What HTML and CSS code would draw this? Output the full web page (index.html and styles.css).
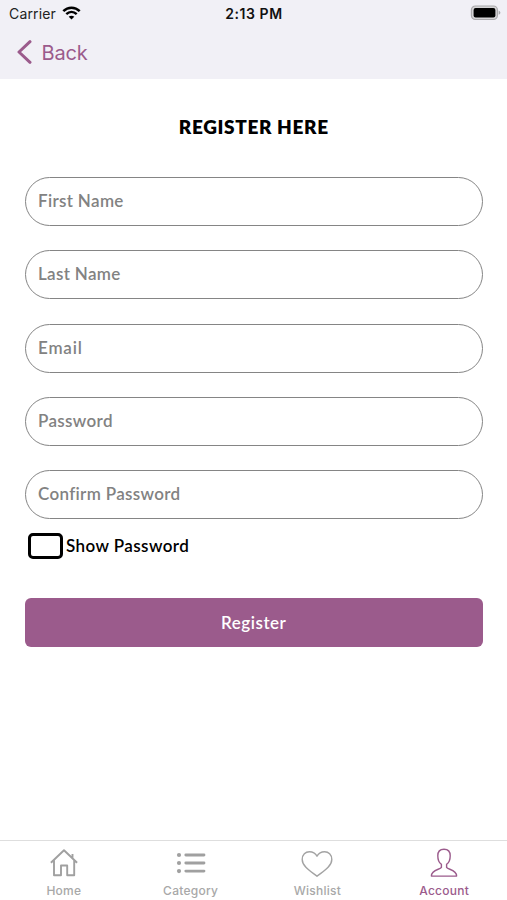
FILE: index.html
```html
<!DOCTYPE html>
<html lang="en">
<head>
<meta charset="utf-8">
<title>Register</title>
<link rel="stylesheet" href="styles.css">
</head>
<body>
<div class="screen">
  <header class="header">
    <div class="status">
      <div class="carrier"><span class="carrier-name">Carrier</span>
        <svg class="wifi" width="19" height="14" viewBox="0 0 19 14"><g fill="none" stroke="#000" stroke-width="2.5"><path d="M1.3 5.1C6 .5 13 .5 17.7 5.1"/><path d="M4.3 8.2C7.4 5.3 11.6 5.3 14.7 8.2"/></g><path d="M6.7 10.7C8.3 9.3 10.7 9.3 12.3 10.7L9.5 13.5Z"/></svg>
      </div>
      <span class="time">2:13 PM</span>
      <div class="battery"><svg width="31" height="16" viewBox="0 0 31 16"><rect x="1.4" y="1" width="26" height="13.5" rx="4" fill="#d5d4d6" stroke="#aaa9ac" stroke-width="1.2"/><rect x="3.6" y="3" width="21.8" height="9.5" rx="2"/><path d="M28.6 5.6Q30.4 6.3 30.4 7.7T28.6 9.8Z" fill="#aaa9ac"/></svg></div>
    </div>
    <a class="back"><svg width="15" height="24" viewBox="0 0 15 24"><path d="M13 1.7L2 12L13 22.3" fill="none" stroke="#9b5b8c" stroke-width="3" stroke-linecap="round" stroke-linejoin="round"/></svg><span class="back-label">Back</span></a>
  </header>
  <main class="content">
    <h1 class="title">REGISTER HERE</h1>
    <form class="form">
      <label class="field"><span>First Name</span></label>
      <label class="field"><span>Last Name</span></label>
      <label class="field"><span class="email">Email</span></label>
      <label class="field"><span>Password</span></label>
      <label class="field"><span>Confirm Password</span></label>
    </form>
    <label class="show"><span class="box"></span><span class="show-label">Show Password</span></label>
    <button class="submit" type="button">Register</button>
  </main>
  <nav class="tabs">
    <a class="tab">
      <svg width="32" height="32" viewBox="0 0 32 32"><path d="M2.9 15.8L16 3.2L29.1 15.8M6 13.5V28.2H13V18.5H19.2V28.2H26.2V13.5M24.5 10.7V7" fill="none" stroke="#a0a0a0" stroke-width="1.9" stroke-linejoin="round"/></svg>
      <span class="tab-label">Home</span>
    </a>
    <a class="tab">
      <svg width="32" height="32" viewBox="0 0 32 32"><g fill="#a0a0a0"><circle cx="4" cy="8" r="2.1"/><circle cx="4" cy="16" r="2.1"/><circle cx="4" cy="24.1" r="2.1"/></g><path d="M10.8 8H29M10.8 16H29M10.8 24.1H29" stroke="#a0a0a0" stroke-width="2.8" stroke-linecap="round"/></svg>
      <span class="tab-label">Category</span>
    </a>
    <a class="tab">
      <svg width="32" height="32" viewBox="0 0 32 32"><path d="M16 29.3C10.5 24.8 1.2 19.5 1.2 12.4C1.2 7.5 4.5 4.7 8.4 4.7C12 4.7 14.7 6.8 16 9.2C17.3 6.8 20 4.7 23.6 4.7C27.5 4.7 30.8 7.5 30.8 12.4C30.8 19.5 21.5 24.8 16 29.3Z" fill="none" stroke="#a3a3a3" stroke-width="1.4" stroke-linejoin="round"/></svg>
      <span class="tab-label">Wishlist</span>
    </a>
    <a class="tab active">
      <svg width="32" height="32" viewBox="0 0 32 32"><path d="M13.4 17.3C11 15.7 9.8 12.5 9.8 8.7C9.8 4.7 12.2 2.2 16 2.2S22.2 4.7 22.2 8.7C22.2 12.5 21 15.7 18.6 17.3V20.4C19.7 22.7 28.6 22.3 28.6 29.1H3.4C3.4 22.3 12.3 22.7 13.4 20.4Z" fill="none" stroke="#9b5b8c" stroke-width="1.4" stroke-linejoin="round"/></svg>
      <span class="tab-label">Account</span>
    </a>
  </nav>
</div>
</body>
</html>
```
FILE: styles.css
```css
* { box-sizing: border-box; }
body { margin: 0; background: #fff; font-family: Lato, "Liberation Sans", sans-serif; }
.screen { width: 507px; height: 900px; display: flex; flex-direction: column; overflow: hidden; }
svg { display: block; flex: none; }

.header { height: 79px; flex: none; background: #f1f0f6; font-family: Inter, sans-serif; }
.status { height: 28px; display: grid; grid-template-columns: 1fr auto 1fr; align-items: center; padding: 0 6px 0 9px; font-size: 14px; }
.carrier { display: flex; align-items: center; gap: 6px; color: #222; letter-spacing: .15px; }
.carrier-name { margin-top: -1px; }
.wifi { margin-top: -3px; }
.time { margin: -2px 0 0 -2px; font-weight: 600; color: #111; font-size: 14px; letter-spacing: .55px; }
.battery { display: flex; justify-content: flex-end; margin-top: -2px; }
.back { display: flex; align-items: center; gap: 10px; height: 48px; padding-left: 16.5px; color: #9b5b8c; font-size: 20px; letter-spacing: -.2px; }
.back-label { margin-top: 1px; }

.content { flex: 1; padding: 0 24.5px 0 25px; display: flex; flex-direction: column; }
.title { margin: 35px 0 38px; height: 25px; line-height: 25px; text-align: center; font-size: 19px; font-weight: 800; letter-spacing: .64px; color: #000; }
.form { display: flex; flex-direction: column; gap: 24.3px; }
.field { height: 49px; border: 1px solid #858585; border-radius: 25px; display: flex; align-items: center; padding: 0 0 2px 12px; font-size: 17px; font-weight: 600; letter-spacing: .33px; color: #828282; }
.email { letter-spacing: .8px; }
.show { display: flex; align-items: center; gap: 3px; height: 28px; margin-top: 13px; padding-left: 3px; font-size: 17px; font-weight: 600; letter-spacing: .42px; color: #000; }
.show-label { margin-top: -2px; }
.box { width: 35px; height: 26px; border: 3px solid #000; border-radius: 5px; }
.submit { height: 49px; margin-top: 38px; border: 0; border-radius: 6px; background: #9b5b8c; color: #fff; font-family: inherit; font-size: 17px; font-weight: 600; letter-spacing: .5px; }

.tabs { height: 60px; flex: none; border-top: 1px solid #dedede; display: grid; grid-template-columns: repeat(4, 1fr); }
.tab { display: flex; flex-direction: column; align-items: center; padding: 6px 0 0 1px; color: #a8a8a8; }
.tab-label { margin-top: 5px; font: 500 12px/14px Inter, sans-serif; letter-spacing: .25px; }
.active { color: #9b5b8c; }
```
